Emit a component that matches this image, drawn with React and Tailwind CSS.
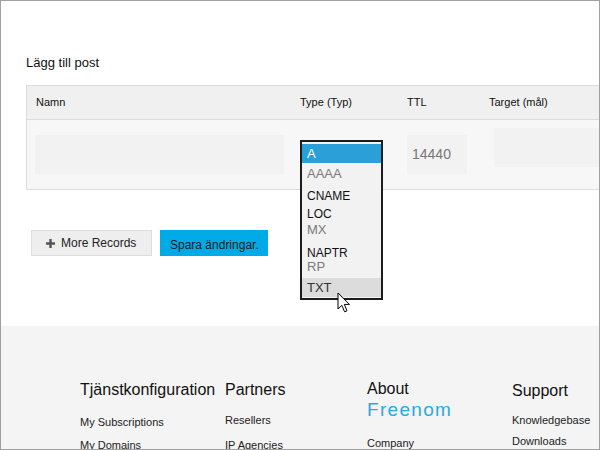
import React from "react";

function Cursor() {
  return (
    <svg
      className="absolute left-[336px] top-[291px]"
      width="14"
      height="22"
      viewBox="0 0 14 22"
    >
      <path
        d="M1 1 L1 17 L4.8 13.3 L7.6 19.8 L10 18.8 L7.3 12.4 L12.5 12.4 Z"
        fill="#ffffff"
        stroke="#000000"
        strokeWidth="1"
        strokeLinejoin="miter"
      />
    </svg>
  );
}

function SelectList() {
  return (
    <div className="absolute left-0 top-[20px] w-[83px] border-2 border-[#1c1c1c] bg-[#f2f2f2] pt-[2px] pb-px text-[12px]">
      <div className="h-[19px] bg-[#2a9fd8] pl-[5px] text-[13px] leading-[19px] text-white">A</div>
      <div className="mt-[3.5px] pl-[5px] text-[13px] leading-[14px] text-[#7a7a7a]">AAAA</div>
      <div className="mt-[8.5px] pl-[5px] leading-[14px] text-[#111]">CNAME</div>
      <div className="mt-[4px] pl-[5px] leading-[14px] text-[#111]">LOC</div>
      <div className="mt-[2px] pl-[5px] text-[13px] leading-[14px] text-[#7a7a7a]">MX</div>
      <div className="mt-[9px] pl-[5px] leading-[14px] text-[#111]">NAPTR</div>
      <div className="pl-[5px] text-[13px] leading-[14px] text-[#7a7a7a]">RP</div>
      <div className="mt-[4px] h-[19px] bg-[#dcdcdc] pl-[5px] text-[13px] leading-[19px] text-[#333]">TXT</div>
    </div>
  );
}

export default function App() {
  return (
    <div className="relative h-[450px] w-[600px] overflow-hidden border border-[#a0a0a0] bg-white font-['Liberation_Sans',Arial,sans-serif] text-[#111]">
      <div className="pl-[25px] pt-[54px]">
        <div className="text-[13px] leading-[16px] text-[#111]">Lägg till post</div>

        <div className="mt-[14px] w-[640px] border border-[#dcdcdc]">
          <div className="flex h-[34px] items-center border-b border-[#dcdcdc] bg-[#f0f0f0] text-[11px] text-[#111]">
            <div className="w-[273px] pl-[9px]">Namn</div>
            <div className="w-[107px]">Type (Typ)</div>
            <div className="w-[82px]">TTL</div>
            <div>Target (mål)</div>
          </div>
          <div className="flex h-[69px] bg-[#f7f7f7]">
            <div className="w-[273px] pl-[8px] pt-[15px]">
              <div className="h-[39px] w-[249px] bg-[#f2f2f2]" />
            </div>
            <div className="relative w-[107px]">
              <SelectList />
            </div>
            <div className="w-[82px] pt-[15px]">
              <div className="flex h-[39px] w-[60px] items-center bg-[#f2f2f2] pl-[5px] text-[14px] text-[#777]">
                14440
              </div>
            </div>
            <div className="flex-1 pl-[5px] pt-[8px]">
              <div className="h-[39px] w-full bg-[#f2f2f2]" />
            </div>
          </div>
        </div>

        <div className="ml-[5px] mt-[40px] flex gap-[8px]">
          <div className="flex h-[26px] w-[121px] items-center gap-[6px] border border-[#dddddd] bg-[#eeeeee] pl-[14px] text-[12px] text-[#222]">
            <svg width="9" height="9" viewBox="0 0 9 9">
              <path d="M3.3 0 H5.7 V3.3 H9 V5.7 H5.7 V9 H3.3 V5.7 H0 V3.3 H3.3 Z" fill="#555" />
            </svg>
            <span>More Records</span>
          </div>
          <div className="flex h-[26px] w-[108px] items-center bg-[#00aae7] pl-[10px] pt-[3px] text-[12px] text-[#1a1a1a]">
            Spara ändringar.
          </div>
        </div>
      </div>

      <div className="mt-[70px] flex h-[140px] bg-[#f4f4f4] pl-[79px] pt-[54px]">
        <div className="w-[145px]">
          <div className="text-[16px] leading-[20px] text-[#111]">Tjänstkonfiguration</div>
          <div className="mt-[15px] text-[11px] leading-[14px] text-[#222]">My Subscriptions</div>
          <div className="mt-[9px] text-[11px] leading-[14px] text-[#222]">My Domains</div>
        </div>
        <div className="w-[142px]">
          <div className="text-[16px] leading-[20px] text-[#111]">Partners</div>
          <div className="mt-[13px] text-[11px] leading-[14px] text-[#222]">Resellers</div>
          <div className="mt-[11px] text-[11px] leading-[14px] text-[#222]">IP Agencies</div>
        </div>
        <div className="w-[145px]">
          <div className="-mt-px text-[16px] leading-[20px] text-[#111]">About</div>
          <div className="text-[19px] leading-[22px] tracking-[1.3px] text-[#2aa9e0]">Freenom</div>
          <div className="mt-[15px] text-[11px] leading-[14px] text-[#222]">Company</div>
        </div>
        <div className="flex-1">
          <div className="mt-px text-[16px] leading-[20px] text-[#111]">Support</div>
          <div className="mt-[12px] text-[11px] leading-[14px] text-[#222]">Knowledgebase</div>
          <div className="mt-[7px] text-[11px] leading-[14px] text-[#222]">Downloads</div>
        </div>
      </div>

      <Cursor />
    </div>
  );
}
